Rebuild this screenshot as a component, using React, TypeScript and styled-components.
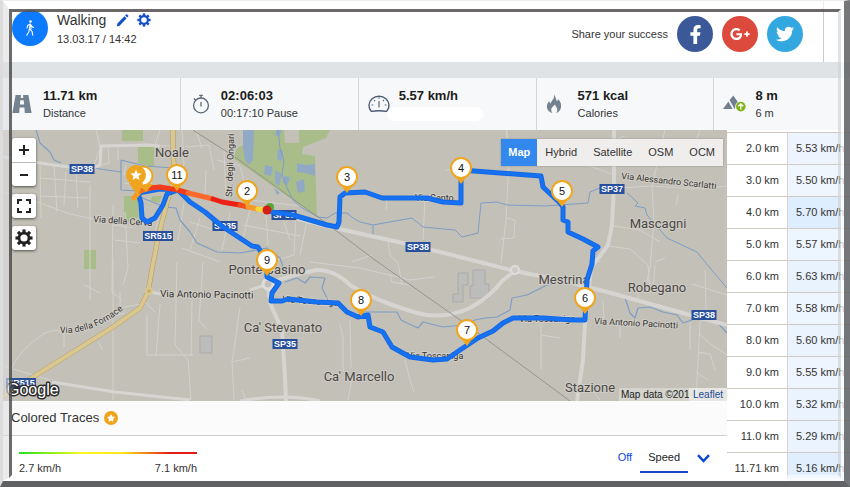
import React from 'react';
import styled, { createGlobalStyle } from 'styled-components';
import { FaFacebookF, FaGooglePlusG, FaTwitter, FaStar } from 'react-icons/fa';

const GlobalStyle = createGlobalStyle`
  *, *::before, *::after { box-sizing: border-box; }
  body { margin: 0; background: #fff; }
  button { font: inherit; color: inherit; border: 0; background: none; padding: 0; cursor: pointer; }
`;

/* ---------- shell ---------- */

const Page = styled.div`
  position: relative;
  min-height: 100vh;
  padding-left: 3px;
  overflow: hidden;
  background: #fff;
  color: #333;
  font: 11px/16px 'Liberation Sans', Arial, sans-serif;
`;

const OuterBevel = styled.div`
  position: absolute;
  inset: 0;
  display: flex;
  pointer-events: none;
  border-style: solid;
  border-width: 1px 6px 6px 3px;
  border-color: #ececec rgba(96, 97, 99, 0.86) #606163 #dcdcdd;
`;

const MiddleBevel = styled.div`
  flex: 1;
  display: flex;
  border-style: solid;
  border-width: 8px 3px 3px 6px;
  border-color: rgba(255, 255, 255, 0.6) rgba(255, 255, 255, 0.75) rgba(255, 255, 255, 0.75) rgba(222, 222, 226, 0.6);
`;

const InnerBevel = styled.div`
  flex: 1;
  border-style: solid;
  border-width: 3px;
  border-color: rgba(88, 84, 84, 0.88) rgba(205, 208, 212, 0.6) rgba(255, 255, 255, 0.5) rgba(78, 76, 76, 0.82);
`;

/* ---------- header ---------- */

const Header = styled.header`
  display: flex;
  align-items: stretch;
  height: 62px;
`;

const Sport = styled.div`
  flex: 1;
  display: flex;
  gap: 9px;
  padding: 10px 0 0 9px;
`;

const SportBadge = styled.span`
  display: flex;
  align-items: center;
  justify-content: center;
  width: 36px;
  height: 36px;
  border-radius: 50%;
  background: #0d7bff;
`;

const TitleRow = styled.div`
  display: flex;
  align-items: center;
  gap: 8px;
  height: 20px;
`;

const Title = styled.h1`
  margin: 0 2px 0 0;
  font-size: 14px;
  font-weight: 400;
  line-height: 20px;
`;

const IconButton = styled.button`
  display: flex;
  align-items: center;
  justify-content: center;
`;

const DateLine = styled.div`
  line-height: 18px;
`;

const Share = styled.div`
  display: flex;
  align-items: center;
  gap: 9px;
  padding: 6px 20px 0 0;
  border-right: 1px solid #c9ccce;
  margin-right: 26px;
`;

const ShareLink = styled.a<{ $color: string }>`
  display: flex;
  align-items: center;
  justify-content: center;
  width: 36px;
  height: 36px;
  border-radius: 50%;
  color: #fff;
  background: ${(p) => p.$color};
`;

/* ---------- statistics ---------- */

const Stats = styled.section`
  display: grid;
  grid-template-columns: repeat(4, 21%) 1fr;
  border-top: 16px solid #dfe3e6;
  background: #f6f8fa;
  height: 68px;
`;

const Stat = styled.div<{ $gap: number }>`
  display: flex;
  align-items: center;
  gap: ${(p) => p.$gap}px;
  padding-left: 9px;
  border-right: 1px solid #d3d6d9;
  &:last-child { border-right: 0; }
`;

const StatText = styled.div`
  display: flex;
  flex-direction: column;
`;

const StatValue = styled.strong`
  font-size: 13px;
  line-height: 18px;
  color: #1c1c1c;
  white-space: nowrap;
`;

const StatLabel = styled.span`
  line-height: 16px;
  color: #333;
`;

const BlankLabel = styled.span`
  width: 96px;
  height: 14px;
  margin: 2px 0 0 -12px;
  border-radius: 7px;
  background: #fff;
`;

/* ---------- main area ---------- */

const Main = styled.main`
  display: grid;
  grid-template-columns: minmax(0, 1fr) 123px;
`;

const MapPanel = styled.section`
  position: relative;
  height: 271px;
  background: #c3c0b8;
`;

const MapSvg = styled.svg`
  display: block;
  width: 100%;
  height: 100%;
`;

const MapControls = styled.div`
  position: absolute;
  top: 8px;
  left: 9px;
  display: flex;
  flex-direction: column;
  gap: 8px;
`;

const ControlBox = styled.div`
  display: flex;
  flex-direction: column;
  width: 24px;
  border-radius: 3px;
  background: #fff;
  box-shadow: 0 1px 3px rgba(0, 0, 0, 0.6);
`;

const ControlButton = styled.button`
  display: flex;
  align-items: center;
  justify-content: center;
  height: 24px;
  & + & { border-top: 1px solid #bbb; }
`;

const MapTypes = styled.div`
  position: absolute;
  top: 9px;
  right: 4px;
  display: flex;
  background: #efeeec;
  box-shadow: 0 0 2px rgba(0, 0, 0, 0.25);
`;

const MapType = styled.button<{ $active?: boolean }>`
  height: 27px;
  padding: 0 ${(p) => (p.$active ? 7 : 8)}px;
  line-height: 27px;
  color: ${(p) => (p.$active ? '#fff' : '#333')};
  font-weight: ${(p) => (p.$active ? 700 : 400)};
  background: ${(p) => (p.$active ? '#3388ee' : 'transparent')};
`;

const Attribution = styled.div`
  position: absolute;
  right: 0;
  bottom: 0;
  display: flex;
  font-size: 10px;
  line-height: 13px;
  color: #222;
`;

const MapData = styled.span`
  width: 70px;
  padding-left: 2px;
  overflow: hidden;
  white-space: nowrap;
  background: rgba(226, 225, 221, 0.55);
`;

const LeafletLink = styled.a`
  padding: 0 4px;
  color: #1b4a96;
  text-decoration: none;
  background: rgba(255, 255, 255, 0.6);
`;

const TracesBar = styled.div`
  display: flex;
  align-items: center;
  gap: 5px;
  height: 35px;
  padding-left: 8px;
  border-bottom: 1px solid #cfcfcf;
  background: #fbfbfb;
`;

const TracesTitle = styled.h2`
  margin: 0;
  font-size: 13px;
  font-weight: 400;
`;

const StarBadge = styled.span`
  display: flex;
  align-items: center;
  justify-content: center;
  width: 14px;
  height: 14px;
  border-radius: 50%;
  color: #fff;
  background: #f0a41c;
`;

const Legend = styled.div`
  display: flex;
  justify-content: space-between;
  padding: 12px 17px 0 16px;
`;

const Scale = styled.div`
  width: 178px;
  padding-top: 4px;
`;

const ScaleBar = styled.div`
  height: 2px;
  background: linear-gradient(90deg, #1de21d, #f8f820 35%, #fbe61c 58%, #e31c16 85%);
`;

const ScaleEnds = styled.div`
  display: flex;
  justify-content: space-between;
  padding-top: 6px;
`;

const Modes = styled.div`
  display: flex;
  align-items: flex-start;
`;

const Mode = styled.button<{ $active?: boolean }>`
  height: 25px;
  padding: 1px 8px 6px;
  line-height: 16px;
  color: ${(p) => (p.$active ? '#222' : '#0c47d6')};
  border-bottom: 2px solid ${(p) => (p.$active ? '#1c43c8' : 'transparent')};
`;

const ChevronButton = styled(IconButton)`
  height: 20px;
  margin-left: 9px;
`;

/* ---------- splits ---------- */

const Splits = styled.table`
  width: 100%;
  align-self: start;
  margin-top: 2px;
  border-collapse: separate;
  border-spacing: 0;
`;

const SplitCell = styled.td<{ $shade?: string }>`
  height: 32px;
  padding: 0 0 1px 8px;
  border-top: 1px solid #d0cac5;
  text-align: left;
  white-space: nowrap;
  background: ${(p) => p.$shade};
`;

const SplitHead = styled.th`
  width: 61px;
  height: 32px;
  padding: 0 8px 1px 0;
  border-top: 1px solid #d0cac5;
  border-right: 1px solid #d5d3d2;
  text-align: right;
  font-weight: 400;
  white-space: nowrap;
`;

/* ---------- icons ---------- */

const Gear = ({ size, color }: { size: number; color: string }) => (
  <svg width={size} height={size} viewBox="0 0 16 16" fill="none" stroke={color}>
    <circle cx="8" cy="8" r="4.4" strokeWidth="2.4" />
    {[0, 45, 90, 135, 180, 225, 270, 315].map((a) => (
      <path key={a} d="M8 0.4V3.2" strokeWidth="2.8" transform={`rotate(${a} 8 8)`} />
    ))}
  </svg>
);

const Walker = () => (
  <svg width="12" height="18" viewBox="0 0 14 20" fill="none" stroke="#fff" strokeWidth="1.3" strokeLinecap="round" strokeLinejoin="round">
    <circle cx="7.6" cy="2.4" r="1.5" fill="#fff" stroke="none" />
    <path d="M7.2 5.4 4.2 7.2 3.6 10M7.4 5.4 9 8l2 1.4M7 5.6 6.4 11l3 3 .8 4.4M6.3 11l-.8 3.6-2.3 3.8M8 6.2 8.2 11" />
  </svg>
);

const Pencil = () => (
  <svg width="13" height="13" viewBox="0 0 13 13" fill="#1450c4">
    <path d="M.8 12.6 1.4 9.6 8.4 2.2l2.2 2.1-7 7.4zM9.1 1.4l.9-.9q.5-.5 1.1 0l1.1 1.1q.5.5 0 1l-.9.9z" />
  </svg>
);

const Road = () => (
  <svg width="20" height="20" viewBox="0 0 20 20" fill="#758290" fillRule="evenodd">
    <path d="M3.6 1H16.4L19.6 19H.4zM8.9 1 8.7 4h2.6L11.100 1zM8.300 6.200 7.900 10.500h4.200L11.700 6.200zM7.600 13.500 7.200 19h5.600l-.4-5.500z" />
  </svg>
);

const Stopwatch = () => (
  <svg width="22" height="22" viewBox="0 0 22 22" fill="none" stroke="#5b6875" strokeWidth="1.3">
    <circle cx="11" cy="12.4" r="7.4" />
    <path d="M11 5V2.6M9.2 2.4h3.6M3.8 5.4l1.8 1.6M11 9v4.4" />
  </svg>
);

const Gauge = () => (
  <svg width="22" height="22" viewBox="0 0 22 22" fill="none" stroke="#4c5a73" strokeWidth="1.4">
    <path d="M3.4 18.4A10 9.2 0 1 1 18.6 18.4Q11 17 3.4 18.4z" strokeLinejoin="round" />
    <path d="M11 8v6.4M3.6 12h1.6M16.8 12h1.6M6 7.2l1 1M16 7.2l-1 1M11 4.4v1.4" strokeWidth="1.1" />
  </svg>
);

const Flame = () => (
  <svg width="16" height="20" viewBox="0 0 16 20" fill="#748190">
    <path d="M8.2.5C10 3.2 9.4 5 11 7.2c.7-.6.9-1.3.8-2.2C14.6 7.2 15.4 10 15 13.2 14.5 16.5 12.5 18.3 10.2 19c1-1.5 1.4-3 .9-4.500-.5-1.400-1.700-2-1.900-4C7.200 12 5 13.500 5.200 16c.1 1.200.5 2.200 1.200 3C3.500 18.300 1.200 16.300.9 13.200.7 10.500 2 8.700 3.200 7c.2 1.200.5 2 1.200 2.800C5.600 6.500 8.600 4.700 8.200.5z" />
  </svg>
);

const Mountain = () => (
  <svg width="24" height="18" viewBox="0 0 24 18">
    <path d="M0 14 5.400 6.600 9.600 14zM6.600 5 10.300.5 15.500 8 11.500 14z" fill="#738090" />
    <circle cx="17.800" cy="11.600" r="5.600" fill="#f6f8fa" />
    <circle cx="17.800" cy="11.600" r="4.800" fill="#80b416" />
    <path d="M17.800 14.400V9.200M15.400 11.300l2.400-2.400 2.400 2.400" fill="none" stroke="#fff" strokeWidth="1.300" />
  </svg>
);

/* ---------- map drawing ---------- */

const ROUTE =
  'M272 212 293 215 310 220 327 225 337 227 339 222 340 197 345 193 365 192 382 198 427 198 443 202 461 203V170L541 176 543 187 560 203 563 207V220L568 222V232L583 239 598 247 593 251 592 264 587 280 585 320 573 320 543 318 513 318 503 323 493 331 478 338 460 350 447 359 433 360 410 357 392 347 383 332 370 327 368 315 358 317 347 312 338 303 317 302 288 299 282 301 271 301 272 293 279 283 267 277 267 262 258 247 252 246 223 227 205 212 190 202 183 195 178 190 167 194 163 205 155 218 147 222 142 218 141 203 138 193 160 189 178 190';

const TRACE: { d: string; color: string }[] = [
  { d: 'M134 198 140 191', color: '#f59a23' },
  { d: 'M140 191 150 188', color: '#f4711c' },
  { d: 'M150 188 160 187 178 190 188 193', color: '#f23b1a' },
  { d: 'M188 193 205 197 213 199', color: '#fb6a2a' },
  { d: 'M213 199 222 202 240 205', color: '#ee1f14' },
  { d: 'M240 205 248 207', color: '#f24a1b' },
  { d: 'M248 207 258 209', color: '#f79a2b' },
  { d: 'M258 209 264 210', color: '#f5d83c' },
];

const PINS: [string, number, number][] = [
  ['2', 247, 191],
  ['3', 347, 177],
  ['4', 461, 168],
  ['5', 562, 191],
  ['6', 585, 298],
  ['7', 467, 330],
  ['8', 361, 300],
  ['9', 267, 260],
  ['11', 177, 175],
];

const PLACES: [string, number, number][] = [
  ['Noale', 172, 157],
  ['Ponte Casino', 267, 274],
  ["Ca' Stevanato", 283, 332],
  ["Ca' Marcello", 359, 381],
  ['Mestrina', 564, 284],
  ['Robegano', 657, 292],
  ['Mascagni', 658, 228],
  ['Stazione', 590, 392],
];

const SHIELDS: [string, number, number][] = [
  ['SP38', 82, 169],
  ['SP38', 418, 247],
  ['SP37', 612, 189],
  ['SP38', 704, 315],
  ['SP35', 285, 344],
  ['SR515', 158, 236],
  ['SR515', 21, 383],
  ['SP35', 225, 226],
  ['SP38', 284, 215],
];

const MINOR_ROADS =
  'M3 192 40 203 70 214 93 219M40 165 41 218M54 166 57 212M66 172 64 205M76 174 78 208M40 178 90 182M41 196 88 198M90 185V300M96 130 100 146M101 146 93 168M108 146 109 163 101 165M118 146 118 160M113 205 112 292 122 300M113 260 113 400M124 175 126 165M112 225 135 228M114 240 140 243M125 212 128 268 123 285M120 292V308L146 303M112 317 125 313M146 303 155 312M147 315V355H193M160 304 156 356M177 262 175 345 188 360 191 400M192 300 191 356M203 262 199 320 207 330M160 130 155 145M147 145 173 146M182 130 184 165 175 175M186 147 209 145 214 170M196 130 202 148M206 170 205 195 183 190M224 150 226 198M217 160 240 166 245 185M254 190 243 240M230 213 222 250M266 215 268 245M280 210 290 240M250 200 300 206M243 225 300 236M296 214 294 255 270 262M307 220 300 255M184 203 178 240M190 222 215 230M160 212 155 232M200 218 190 250M182 248 220 262M150 178 153 190M124 183 140 185M10 372Q18 350 45 333L56 330 64 333V347M3 366 50 380M84 285 100 293M98 342 103 350M240 307 234 350 232 360 234 400M250 358 232 362M242 390 246 400M340 325 343 337V370L352 378 348 400M350 320 351 368M405 360 410 380 414 392M390 275 392 282 410 285M310 262 360 268 410 280 434 277M352 262 372 255M508 148 507 130M506 130 509 155M509 160 506 220 501 263M445 170H458M506 218 515 220 514 238 500 239M425 198 423 240M387 200 386 210M388 240 390 255 398 263 402 285M614 226 640 230 660 242M608 246 630 249 648 265M590 255 600 262M652 186 654 222 650 268 645 290M540 162 590 166 614 175M665 130 652 186 700 189 727 186M700 130 695 145M612 141 625 136M620 188 652 186M676 205 678 195M648 265 650 290M655 265 653 290M638 285V298M692 284 727 295M705 270 706 310 700 323 696 400M700 335 712 345 727 355M698 352 710 354 715 370M696 372 708 380M690 322V350M620 322V338M655 262 665 258M541 318V370M541 335 560 338M592 390 600 400M603 300 604 320';

const RoadMap = () => (
  <MapSvg viewBox="3 130 724 271" preserveAspectRatio="xMidYMid slice" role="img" aria-label="Walking route map">
    <g fill="#a9bd8a">
      <path d="M122 130h21v11h-21zM138 147h16v20l-16-4zM124 196h16v20l-8 6h-8zM84 250h12v19H84zM152 196l10 0-3 7-8-2z" />
      <path d="M243 130H284L285 143H299V130H330L326 138 303 147 302 154 315 156 317 217 300 205 234 159 236 149 243 145z" />
    </g>
    <g fill="#92a9c6">
      <path d="M243 130h11l-1 30-4 5-4-5 -2-12zM265 165l8 2-2 9-7-2zM278 149l5 2-1 10-5-2zM297 163l8 2 10-1v12l-9-3-9-1zM275 170l7 4-3 12-4-3zM284 176l6 1-2 8-5-2zM296 182l8-3 1 12-7 2zM276 130h6l-3 7-4-2zM274 188l6 5-3 2z" />
    </g>
    <g fill="#bcbdbb" stroke="#aaaaa7">
      <path d="M458 273h10v12h-5v17h-10v-8h5zM473 270h12v14h4v14H470v-12h3zM200 336h12v17h-12z" />
    </g>
    <path d={MINOR_ROADS} fill="none" stroke="#d2d1cd" strokeWidth="1" />
    <g fill="none" stroke="#7f9dc4" strokeWidth="1.2" strokeLinejoin="round">
      <path d="M36 130 40 143 50 152 54 160 61 163M121 190V160L145 166 173 168M121 190 140 191M93 168 121 172M140 197 165 207 176 208 180 220 190 232 197 243 217 252 240 253 267 248 280 258 284 270" />
      <path d="M278 130 280 148 284 160 282 175 288 190 293 200 302 208 318 217 327 218 335 213 347 213 353 218 360 222 373 225V236M373 225 412 218 423 227 455 230 462 237 478 233 481 203 497 202 507 205 545 206 588 203 590 192 600 188" strokeWidth="1" />
      <path d="M627 193 638 203 635 206 645 208 647 215 667 238 697 252 710 268 727 288" strokeWidth="1" />
      <path d="M285 282 297 278 305 283 310 277 325 278 322 288 328 300M363 312 397 312 401 320 407 323 418 328 423 322 443 327 463 325 475 320 485 318 497 317 510 310 512 298 527 295 547 285 560 282M625 298 630 313 635 318 638 308 650 307 663 312 677 315 683 323 692 320M717 322 727 333" />
    </g>
    <g fill="none" stroke="#d6d5d1" strokeLinejoin="round">
      <path d="M3 157 33 162 68 167 93 168 100 165 101 146 147 145 160 146" strokeWidth="3" />
      <path d="M272 212 330 227 403 243 432 250 515 271 560 280 600 290 690 315 727 325" strokeWidth="4" />
      <path d="M268 284Q290 275 317 270 335 270 350 285 373 300 417 313 443 320 470 308 490 297 503 280L515 271" strokeWidth="4" />
      <path d="M268 284 270 303 282 330 285 377 286 401M614 130V185L612 225 608 245 591 268 585 323 583 360 577 401" strokeWidth="4" />
      <path d="M52 382 115 392 190 400M240 401Q285 393 320 401M151 292 165 295M250 290 268 284" strokeWidth="3" />
    </g>
    <circle cx="515" cy="270" r="4" fill="#cccbc6" stroke="#dedddb" strokeWidth="2" />
    <circle cx="268" cy="284" r="5" fill="#c3c0b8" stroke="#dedddb" strokeWidth="3" />
    <path d="M193 130 235 157 318 217 375 260 463 322 570 401" fill="none" stroke="#97948e" strokeWidth="1" />
    <path d="M173 130V155L175 175 167 202 158 238 153 264 148 292 140 308 113 327 33 377 3 397" fill="none" stroke="#af9a60" strokeWidth="5" strokeLinejoin="round" />
    <path d="M173 130V155L175 175 167 202 158 238 153 264 148 292 140 308 113 327 33 377 3 397" fill="none" stroke="#d9c78f" strokeWidth="4" strokeLinejoin="round" />
    <circle cx="149" cy="291" r="3" fill="#c8b06e" stroke="#d9c78f" strokeWidth="2" />

    <g fontFamily="Roboto, sans-serif" fontSize="9" fill="#35332f" stroke="#d2cfc9" strokeWidth="2" paintOrder="stroke" strokeLinejoin="round">
      <path id="fornace" d="M60 333Q95 334 125 308" fill="none" stroke="none" />
      <text><textPath href="#fornace">Via della Fornace</textPath></text>
      <text x="93" y="222" transform="rotate(4 93 222)">Via della Cerva</text>
      <text x="160" y="297" fontSize="10" transform="rotate(1 160 297)">Via Antonio Pacinotti</text>
      <text x="594" y="324" transform="rotate(3 594 324)">Via Antonio Pacinotti</text>
      <text x="621" y="179" transform="rotate(6 621 179)">Via Alessandro Scarlatti</text>
      <text x="232" y="197" transform="rotate(-88 232 197)">Str. degli Ongari</text>
      <text x="415" y="201">Via Cento</text>
      <text x="519" y="322">Via Toscaniga</text>
      <text x="282" y="302" transform="rotate(4 282 302)">Via Toscaniga</text>
      <text x="407" y="359">Via Toscaniga</text>
    </g>
    <g fontFamily="Roboto, sans-serif" fontSize="13" fill="#4a4844" stroke="#cfccc6" strokeWidth="2" paintOrder="stroke" textAnchor="middle">
      {PLACES.map(([name, x, y]) => (
        <text key={name} x={x} y={y}>{name}</text>
      ))}
    </g>
    <g fontFamily="'Liberation Sans', Arial, sans-serif" fontSize="9" fontWeight="700" textAnchor="middle">
      {SHIELDS.map(([name, x, y], i) => {
        const w = name.length > 4 ? 30 : 25;
        return (
          <g key={i}>
            <rect x={x - w / 2} y={y - 5} width={w} height="10" fill="#274f9c" />
            <text x={x} y={y + 3} fill="#fff">{name}</text>
          </g>
        );
      })}
    </g>

    <path d={ROUTE} fill="none" stroke="#1368e4" strokeWidth="5" strokeLinejoin="round" strokeLinecap="round" />
    <path d={ROUTE} fill="none" stroke="#1672f2" strokeWidth="3" strokeLinejoin="round" strokeLinecap="round" />
    {TRACE.map((t) => (
      <path key={t.d} d={t.d} fill="none" stroke={t.color} strokeWidth="5" strokeLinejoin="round" strokeLinecap="round" />
    ))}
    <circle cx="270" cy="207" r="4" fill="#57a83c" />
    <circle cx="267" cy="210" r="4.5" fill="#d41e16" />

    <path d="M139 184 146 192 153 184z" fill="#f0a51e" />
    <circle cx="143" cy="176" r="9.5" fill="#fff" stroke="#f0a51e" strokeWidth="2" />
    <path d="M129 183 138 196 143 183z" fill="#f0a51e" />
    <circle cx="136" cy="175" r="10" fill="#f0a51e" />
    <path d="M136 169.500 137.600 173.300 141.500 173.600 138.500 176.200 139.500 180 136 177.900 132.500 180 133.500 176.200 130.500 173.600 134.400 173.300z" fill="#fff" />
    <g fontFamily="'Liberation Sans', Arial, sans-serif" fontSize="11" textAnchor="middle">
      {PINS.map(([label, x, y]) => (
        <g key={label}>
          <path d={`M${x - 6} ${y + 8} ${x} ${y + 16} ${x + 6} ${y + 8}z`} fill="#f0a51e" />
          <circle cx={x} cy={y} r="10" fill="#fff" stroke="#f0a51e" strokeWidth="2" />
          <text x={x} y={y + 4} fill="#111">{label}</text>
        </g>
      ))}
    </g>
    <text x="7" y="395" fontFamily="'Liberation Sans', Arial, sans-serif" fontSize="16" fill="#fff" stroke="#2c2c2c" strokeWidth="3" paintOrder="stroke" strokeLinejoin="round">
      Google
    </text>
  </MapSvg>
);

/* ---------- data ---------- */

const SPLITS: [string, string, string][] = [
  ['2.0 km', '5.53 km/h', '#eef4fd'],
  ['3.0 km', '5.50 km/h', '#eff6fe'],
  ['4.0 km', '5.70 km/h', '#dfeefe'],
  ['5.0 km', '5.57 km/h', '#edf5fe'],
  ['6.0 km', '5.63 km/h', '#e9f3fe'],
  ['7.0 km', '5.58 km/h', '#edf5fe'],
  ['8.0 km', '5.60 km/h', '#ebf4fe'],
  ['9.0 km', '5.55 km/h', '#eef5fe'],
  ['10.0 km', '5.32 km/h', '#ebf4fe'],
  ['11.0 km', '5.29 km/h', '#eaf3fe'],
  ['11.71 km', '5.16 km/h', '#e0eefe'],
];

export default function App() {
  return (
    <Page>
      <GlobalStyle />
      <Header>
        <Sport>
          <SportBadge><Walker /></SportBadge>
          <div>
            <TitleRow>
              <Title>Walking</Title>
              <IconButton aria-label="Edit workout"><Pencil /></IconButton>
              <IconButton aria-label="Workout settings"><Gear size={14} color="#1450c4" /></IconButton>
            </TitleRow>
            <DateLine>13.03.17 / 14:42</DateLine>
          </div>
        </Sport>
        <Share>
          <span>Share your success</span>
          <ShareLink $color="#3b5998" href="#facebook" aria-label="Facebook"><FaFacebookF size={19} /></ShareLink>
          <ShareLink $color="#dc4a3d" href="#google-plus" aria-label="Google+"><FaGooglePlusG size={20} /></ShareLink>
          <ShareLink $color="#33a8e0" href="#twitter" aria-label="Twitter"><FaTwitter size={18} /></ShareLink>
        </Share>
      </Header>

      <Stats>
        <Stat $gap={11}>
          <Road />
          <StatText><StatValue>11.71 km</StatValue><StatLabel>Distance</StatLabel></StatText>
        </Stat>
        <Stat $gap={9}>
          <Stopwatch />
          <StatText><StatValue>02:06:03</StatValue><StatLabel>00:17:10 Pause</StatLabel></StatText>
        </Stat>
        <Stat $gap={9}>
          <Gauge />
          <StatText><StatValue>5.57 km/h</StatValue><BlankLabel /></StatText>
        </Stat>
        <Stat $gap={16}>
          <Flame />
          <StatText><StatValue>571 kcal</StatValue><StatLabel>Calories</StatLabel></StatText>
        </Stat>
        <Stat $gap={8}>
          <Mountain />
          <StatText><StatValue>8 m</StatValue><StatLabel>6 m</StatLabel></StatText>
        </Stat>
      </Stats>

      <Main>
        <div>
          <MapPanel>
            <RoadMap />
            <MapControls>
              <ControlBox>
                <ControlButton aria-label="Zoom in">
                  <svg width="10" height="10" viewBox="0 0 10 10" stroke="#222" strokeWidth="2"><path d="M5 0v10M0 5h10" /></svg>
                </ControlButton>
                <ControlButton aria-label="Zoom out">
                  <svg width="10" height="10" viewBox="0 0 10 10" stroke="#222" strokeWidth="2"><path d="M1 5h8" /></svg>
                </ControlButton>
              </ControlBox>
              <ControlBox>
                <ControlButton aria-label="Full screen">
                  <svg width="16" height="16" viewBox="0 0 16 16" fill="none" stroke="#222" strokeWidth="2">
                    <path d="M2 6V2h4M10 2h4v4M14 10v4h-4M6 14H2v-4" />
                  </svg>
                </ControlButton>
              </ControlBox>
              <ControlBox>
                <ControlButton aria-label="Map settings"><Gear size={18} color="#222" /></ControlButton>
              </ControlBox>
            </MapControls>
            <MapTypes>
              <MapType $active>Map</MapType>
              <MapType>Hybrid</MapType>
              <MapType>Satellite</MapType>
              <MapType>OSM</MapType>
              <MapType>OCM</MapType>
            </MapTypes>
            <Attribution>
              <MapData>Map data ©2017</MapData>
              <LeafletLink href="#leaflet">Leaflet</LeafletLink>
            </Attribution>
          </MapPanel>
          <TracesBar>
            <TracesTitle>Colored Traces</TracesTitle>
            <StarBadge><FaStar size={8} /></StarBadge>
          </TracesBar>
          <Legend>
            <Scale>
              <ScaleBar />
              <ScaleEnds><span>2.7 km/h</span><span>7.1 km/h</span></ScaleEnds>
            </Scale>
            <Modes>
              <Mode>Off</Mode>
              <Mode $active>Speed</Mode>
              <ChevronButton aria-label="More traces">
                <svg width="13" height="9" viewBox="0 0 13 9" fill="none" stroke="#0c47d6" strokeWidth="2.5"><path d="M1 1.2 6.5 7 12 1.2" /></svg>
              </ChevronButton>
            </Modes>
          </Legend>
        </div>
        <Splits>
          <tbody>
            {SPLITS.map(([distance, speed, shade]) => (
              <tr key={distance}>
                <SplitHead scope="row">{distance}</SplitHead>
                <SplitCell $shade={shade}>{speed}</SplitCell>
              </tr>
            ))}
          </tbody>
        </Splits>
      </Main>

      <OuterBevel>
        <MiddleBevel>
          <InnerBevel />
        </MiddleBevel>
      </OuterBevel>
    </Page>
  );
}
